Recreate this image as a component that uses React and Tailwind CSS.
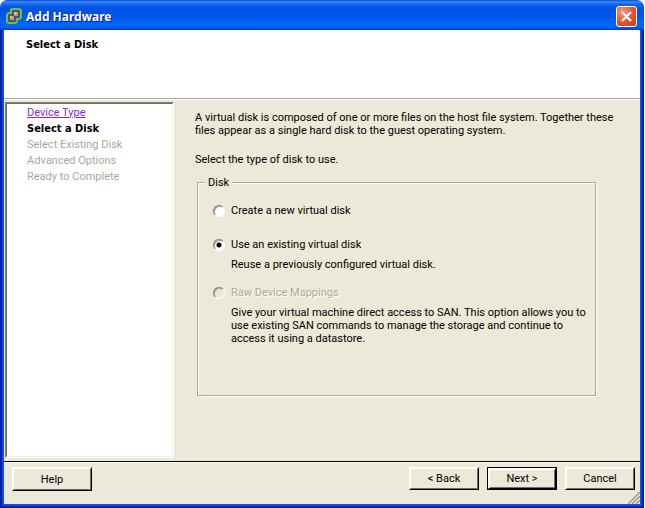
import React, { useState } from 'react';

const steps = [
  { name: 'Device Type', state: 'visited' },
  { name: 'Select a Disk', state: 'current' },
  { name: 'Select Existing Disk', state: 'pending' },
  { name: 'Advanced Options', state: 'pending' },
  { name: 'Ready to Complete', state: 'pending' },
];

function AppIcon() {
  return (
    <svg width="16" height="16" viewBox="0 0 16 16" aria-hidden="true">
      <path
        d="M6 1h7.5L15 2.500V9.500L13.500 11H11v2.500L9.500 15h-7L1 13.500v-7L2.500 5H5V2z"
        fill="#1c5fb0"
        stroke="#86b832"
        strokeWidth="2"
      />
      <path d="M8 4h4v4H8zM4 8h4v4H4z" fill="#f7941d" />
      <path d="M8 4h2v2H8zM4 8h2v2H4z" fill="#ffc870" />
    </svg>
  );
}

function TitleBar({ title }) {
  return (
    <div className="flex h-[30px] items-center gap-1 rounded-t-[7px] bg-[linear-gradient(180deg,#0a48c8_0px,#3a8cff_2px,#1468f0_4px,#0054e3_8px,#0055e5_16px,#0066ff_24px,#0060f8_27px,#0040c0_30px)] pt-[2px] pr-[7px] pl-[6px]">
      <AppIcon />
      <h1 className="flex-1 pt-[2px] font-['Noto_Sans','DejaVu_Sans',sans-serif] text-[12px] leading-4 font-bold text-white [text-shadow:1px_1px_0_#0a1883]">
        {title}
      </h1>
      <button
        type="button"
        aria-label="Close"
        className="flex h-[21px] w-[21px] items-center justify-center rounded-[3px] border border-white bg-[radial-gradient(circle_at_30%_25%,#f09a80,#e0502c_55%,#c83c14)]"
      >
        <svg width="13" height="13" viewBox="0 0 13 13" aria-hidden="true">
          <path d="M2 2l9 9M11 2l-9 9" stroke="#fff" strokeWidth="2.2" />
        </svg>
      </button>
    </div>
  );
}

function Steps() {
  return (
    <nav className="w-[169px] shrink-0 border border-t-[#808080] border-r-white border-b-white border-l-[#808080] bg-white">
      <ol className="h-full border border-t-[#716f64] border-r-[#f1efe2] border-b-[#f1efe2] border-l-[#716f64] pl-5">
        {steps.map(({ name, state }) => (
          <li key={name} className="flex h-4 items-center">
            {state === 'visited' && (
              <a href="#device-type" className="text-[#8a2be2] underline">{name}</a>
            )}
            {state === 'current' && (
              <span className="font-['DejaVu_Sans_Condensed','DejaVu_Sans',sans-serif] font-bold" aria-current="step">
                {name}
              </span>
            )}
            {state === 'pending' && <span className="text-[#aca899]">{name}</span>}
          </li>
        ))}
      </ol>
    </nav>
  );
}

function DiskOption({ id, label, disabled, checked, onSelect, children }) {
  return (
    <div className={children ? 'mb-[15px]' : 'mb-[21px]'}>
      <div className="flex items-center gap-[6px]">
        <input
          type="radio"
          name="disk"
          id={id}
          checked={checked}
          disabled={disabled}
          onChange={() => onSelect(id)}
          className="h-3 w-3 appearance-none rounded-full border border-t-[#808074] border-r-white border-b-white border-l-[#808074] bg-white shadow-[inset_1px_1px_0_#aca899] checked:bg-[radial-gradient(circle,#000_2px,#fff_3px)] disabled:bg-[#ece9d8]"
        />
        <label
          htmlFor={id}
          className={disabled ? 'text-[#aca899] [text-shadow:1px_1px_0_#fff]' : ''}
        >
          {label}
        </label>
      </div>
      {children && <p className="mt-[7px] pl-[18px]">{children}</p>}
    </div>
  );
}

function PushButton({ children, className = 'h-[23px] w-[70px]', primary }) {
  return (
    <button
      type="button"
      className={`${className} ${
        primary ? 'border-black' : 'border-t-white border-r-black border-b-black border-l-white'
      } border bg-[#ece9d8]`}
    >
      <span
        className={`flex h-full items-center justify-center border border-t-white border-l-white ${
          primary
            ? 'border-r-black border-b-black shadow-[inset_1px_1px_0_#fff,inset_-1px_-1px_0_#716f64]'
            : 'border-r-[#716f64] border-b-[#716f64]'
        }`}
      >
        {children}
      </span>
    </button>
  );
}

export default function App() {
  const [disk, setDisk] = useState('existing');

  return (
    <div className="flex min-h-screen flex-col bg-white pr-px font-['Roboto','DejaVu_Sans',sans-serif] text-[11px] leading-[13px] text-black">
      <TitleBar title="Add Hardware" />
      <div className="flex flex-1 flex-col border-2 border-t-0 border-[#001ea0]">
        <div className="flex flex-1 flex-col border-2 border-t-0 border-[#0a50ee] bg-[#ece9d8]">
          <header className="h-[69px] border-b border-[#aca899] bg-white pt-2 pl-[22px]">
            <h2 className="font-['DejaVu_Sans_Condensed','DejaVu_Sans',sans-serif] font-bold">Select a Disk</h2>
          </header>
          <div className="flex flex-1 gap-[21px] border-t border-white pt-[2px] pr-3 pb-[3px] pl-px">
            <Steps />
            <main className="flex-1 pt-[9px]">
              <p>
                A virtual disk is composed of one or more files on the host file system. Together these
                <br />
                files appear as a single hard disk to the guest operating system.
              </p>
              <p className="mt-4">Select the type of disk to use.</p>
              <fieldset className="mt-[10px] mr-8 ml-[2px] h-[220px] border border-[#aca899] pr-1 pl-[15px] shadow-[1px_1px_0_#fff,inset_1px_1px_0_#fff]">
                <legend className="-ml-2 bg-[#ece9d8] px-[3px]">Disk</legend>
                <div className="pt-[15px]">
                  <DiskOption id="new" label="Create a new virtual disk" checked={disk === 'new'} onSelect={setDisk} />
                  <DiskOption id="existing" label="Use an existing virtual disk" checked={disk === 'existing'} onSelect={setDisk}>
                    Reuse a previously configured virtual disk.
                  </DiskOption>
                  <DiskOption id="raw" label="Raw Device Mappings" disabled checked={disk === 'raw'} onSelect={setDisk}>
                    Give your virtual machine direct access to SAN. This option allows you to
                    <br />
                    use existing SAN commands to manage the storage and continue to
                    <br />
                    access it using a datastore.
                  </DiskOption>
                </div>
              </fieldset>
            </main>
          </div>
          <footer className="relative flex h-[43px] items-start gap-2 border-t border-black pt-[5px] pr-[5px] pl-2 shadow-[inset_0_1px_0_#fff]">
            <PushButton className="mr-auto h-6 w-20">Help</PushButton>
            <PushButton>&lt; Back</PushButton>
            <PushButton primary>Next &gt;</PushButton>
            <PushButton>Cancel</PushButton>
            <svg width="13" height="13" viewBox="0 0 13 13" className="absolute right-0 bottom-0" aria-hidden="true">
              <path d="M0 13L13 0M4 13l9-9M8 13l5-5" stroke="#fff" strokeWidth="1" />
              <path d="M1 13L13 1M5 13l8-8M9 13l4-4" stroke="#9d9a8a" strokeWidth="1.6" />
            </svg>
          </footer>
        </div>
      </div>
    </div>
  );
}
